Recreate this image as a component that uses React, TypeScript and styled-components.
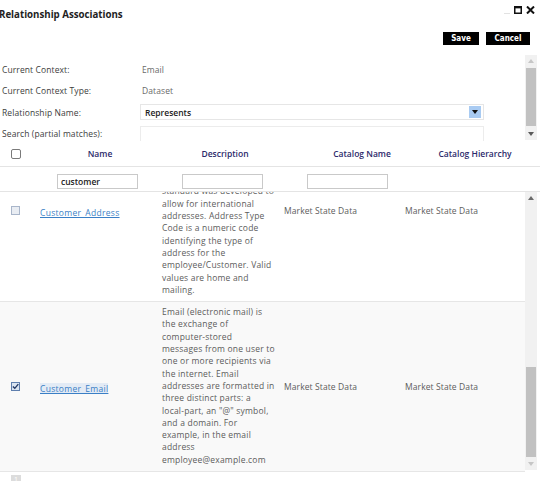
import React, { useLayoutEffect, useRef } from 'react';
import styled, { createGlobalStyle } from 'styled-components';

const FONT = `"Open Sans", "Noto Sans", sans-serif`;

const GlobalStyle = createGlobalStyle`
  html, body { margin: 0; padding: 0; background: #fff; }
  body { font-family: ${FONT}; }
  * { box-sizing: border-box; }
`;

const Dialog = styled.div`
  width: 540px;
  height: 481px;
  overflow: hidden;
  display: flex;
  flex-direction: column;
  background: #fff;
  color: #4a4a4a;
`;

const TitleBar = styled.div`
  height: 28px;
  flex: none;
  display: flex;
  align-items: center;
  justify-content: space-between;
  padding-right: 5px;
`;

const Title = styled.h1`
  margin: 0 0 0 -1px;
  font-size: 9.7px;
  font-weight: 700;
  color: #1e1e1e;
`;

const WindowControls = styled.div`
  align-self: flex-start;
  margin-top: 6px;
  display: flex;
  align-items: flex-end;
  gap: 4px;
`;

const ButtonBar = styled.div`
  height: 27px;
  flex: none;
  display: flex;
  justify-content: flex-end;
  align-items: flex-start;
  gap: 7px;
  padding: 4px 10px 0 0;
`;

const DarkButton = styled.button<{ $w: number }>`
  width: ${(p) => p.$w}px;
  height: 13px;
  padding: 0;
  border: 1px solid #000;
  background: #000;
  color: #fff;
  font-family: "DejaVu Sans Condensed", "DejaVu Sans", sans-serif;
  font-weight: 700;
  font-size: 8px;
  line-height: 11px;
  cursor: pointer;
`;

/* ---------- scroll frames with drawn scrollbars ---------- */

const ScrollFrame = styled.div<{ $h: number }>`
  height: ${(p) => p.$h}px;
  flex: none;
  display: flex;
  padding-right: 3px;
`;

const ScrollContent = styled.div`
  flex: 1;
  min-width: 0;
  overflow-y: auto;
  scrollbar-width: none;
  &::-webkit-scrollbar {
    display: none;
  }
`;

const Track = styled.div<{ $bottomGap: number }>`
  width: 12px;
  flex: none;
  display: flex;
  flex-direction: column;
  background: #f1f1f1;
  margin-bottom: ${(p) => p.$bottomGap}px;
`;

const ArrowButton = styled.div`
  height: 12px;
  flex: none;
  display: flex;
  align-items: center;
  justify-content: center;
`;

const Spacer = styled.div`
  flex: 1;
`;

const Thumb = styled.div<{ $size: number }>`
  height: ${(p) => p.$size}px;
  flex: none;
  margin: 1px 1px;
  background: #c1c1c1;
`;

function Arrow({ dir, color }: { dir: 'up' | 'down'; color: string }) {
  return (
    <ArrowButton>
      <svg width="6" height="4" viewBox="0 0 6 4">
        <path d={dir === 'up' ? 'M0 4 H6 L3 0 Z' : 'M0 0 H6 L3 4 Z'} fill={color} />
      </svg>
    </ArrowButton>
  );
}

function ScrollBar({
  thumb,
  atEnd,
  upColor,
  downColor,
  bottomGap = 0,
}: {
  thumb: number;
  atEnd: boolean;
  upColor: string;
  downColor: string;
  bottomGap?: number;
}) {
  return (
    <Track $bottomGap={bottomGap}>
      <Arrow dir="up" color={upColor} />
      {atEnd && <Spacer />}
      <Thumb $size={thumb} />
      {!atEnd && <Spacer />}
      <Arrow dir="down" color={downColor} />
    </Track>
  );
}

/* ---------- form ---------- */

const FormBody = styled.div`
  padding: 4px 0 6px 0;
`;

const FormRow = styled.div`
  height: 21.3px;
  display: grid;
  grid-template-columns: 140px 344px;
  align-items: center;
`;

const Label = styled.div`
  padding-left: 2px;
  font-size: 8.5px;
  letter-spacing: 0.1px;
  color: #3d3d3d;
`;

const Value = styled.div`
  padding-left: 2px;
  font-size: 8.5px;
  letter-spacing: 0.1px;
  color: #6a6a6a;
`;

const SelectBox = styled.div`
  height: 16px;
  display: flex;
  align-items: center;
  justify-content: space-between;
  border: 1px solid #e6e6e6;
  padding: 0 2px 0 4px;
  font-size: 8.5px;
  font-weight: 600;
  color: #222;
`;

const DropButton = styled.span`
  width: 12px;
  height: 12px;
  background: #a9cbf2;
  display: flex;
  align-items: center;
  justify-content: center;
`;

const TextBox = styled.div`
  height: 16px;
  border: 1px solid #ececec;
`;

/* ---------- table ---------- */

const HeadGrid = styled.div`
  flex: none;
  display: grid;
  grid-template-columns: 30px 135px 125px 125px 125px;
  align-items: center;
  border-bottom: 1px solid #e4e4e4;
`;

const HeadRow = styled(HeadGrid)`
  height: 26px;
`;

const FilterRow = styled(HeadGrid)`
  height: 25px;
`;

const HeadCell = styled.div<{ $pl?: number; $pr?: number }>`
  text-align: center;
  padding-left: ${(p) => p.$pl ?? 0}px;
  padding-right: ${(p) => p.$pr ?? 0}px;
  font-size: 8.5px;
  font-weight: 600;
  color: #2c2a6b;
`;

const CheckCell = styled.div`
  display: flex;
  justify-content: center;
  padding-left: 1px;
`;

const HeadCheck = styled.span`
  width: 10px;
  height: 10px;
  border: 1px solid #7a7a7a;
  border-radius: 2px;
  background: #fff;
`;

const FilterInput = styled.input<{ $ml: number }>`
  margin-left: ${(p) => p.$ml}px;
  width: 81px;
  height: 15px;
  border: 1px solid #c9c9c9;
  padding: 0 3px;
  font-family: ${FONT};
  font-size: 8.5px;
  font-weight: 600;
  color: #222;
  outline: none;
`;

const Row = styled.div<{ $alt?: boolean }>`
  display: grid;
  grid-template-columns: 30px 130px 122px 121px 1fr;
  align-items: center;
  border-bottom: 1px solid #e6e6e6;
  background: ${(p) => (p.$alt ? '#f9f9f9' : '#fff')};
`;

const RowCheck = styled.span<{ $checked?: boolean }>`
  width: 9px;
  height: 9px;
  border: 1px solid ${(p) => (p.$checked ? '#5f7fae' : '#a9b6ca')};
  background: ${(p) => (p.$checked ? '#dbe5f1' : '#e9edf3')};
  display: flex;
  align-items: center;
  justify-content: center;
`;

const NameCell = styled.div`
  padding-left: 10px;
  padding-bottom: 2px;
`;

const NameLink = styled.a<{ $selected?: boolean }>`
  font-size: 8.5px;
  letter-spacing: 0.3px;
  color: #3a7fc6;
  text-decoration: underline;
  background: ${(p) => (p.$selected ? 'rgba(150,185,230,0.22)' : 'transparent')};
  cursor: pointer;
`;

const DescCell = styled.div`
  padding: 4px 2px 5px 2px;
  font-size: 8.5px;
  letter-spacing: 0.2px;
  line-height: 12.3px;
  color: #5c5c5c;
  white-space: nowrap;
`;

const DescLine = styled.span`
  display: block;
`;

const DataCell = styled.div`
  padding-left: 2px;
  padding-bottom: 1px;
  font-size: 8.5px;
  letter-spacing: 0.1px;
  color: #5c5c5c;
`;

const Footer = styled.div`
  flex: 1;
  display: flex;
  align-items: flex-start;
  padding: 3px 0 0 11px;
`;

const PageBox = styled.span`
  width: 10px;
  height: 10px;
  background: #dcdcdc;
  color: #fff;
  font-size: 7px;
  line-height: 10px;
  text-align: center;
`;

type Item = { name: string; checked: boolean; alt: boolean; lines: string[] };

const rows: Item[] = [
  {
    name: 'Customer_Address',
    checked: false,
    alt: false,
    lines: [
      'This entity stores the postal',
      'address details of each',
      'employee or customer. The',
      'address format follows the',
      'ISO 19160 international',
      'standard was developed to',
      'allow for international',
      'addresses. Address Type',
      'Code is a numeric code',
      'identifying the type of',
      'address for the',
      'employee/Customer. Valid',
      'values are home and',
      'mailing.',
    ],
  },
  {
    name: 'Customer_Email',
    checked: true,
    alt: true,
    lines: [
      'Email (electronic mail) is',
      'the exchange of',
      'computer-stored',
      'messages from one user to',
      'one or more recipients via',
      'the internet. Email',
      'addresses are formatted in',
      'three distinct parts: a',
      'local-part, an "@" symbol,',
      'and a domain. For',
      'example, in the email',
      'address',
      'employee@example.com',
    ],
  },
];

export default function App() {
  const bodyRef = useRef<HTMLDivElement>(null);
  useLayoutEffect(() => {
    const el = bodyRef.current;
    if (el) el.scrollTop = el.scrollHeight;
  }, []);

  return (
    <>
      <GlobalStyle />
      <Dialog>
        <TitleBar>
          <Title>Relationship Associations</Title>
          <WindowControls>
            <svg width="6" height="8" viewBox="0 0 6 8">
              <line x1="0" y1="7.5" x2="6" y2="7.5" stroke="#e2e2e2" strokeWidth="1" />
            </svg>
            <svg width="8" height="8" viewBox="0 0 8 8">
              <rect x="0.75" y="0.75" width="6.5" height="6.5" fill="none" stroke="#111" strokeWidth="1.5" />
              <line x1="0.5" y1="1.6" x2="7.5" y2="1.6" stroke="#111" strokeWidth="1.5" />
            </svg>
            <svg width="9" height="8" viewBox="0 0 9 8">
              <path d="M1 0.5 L8 7.5 M8 0.5 L1 7.5" stroke="#111" strokeWidth="2" />
            </svg>
          </WindowControls>
        </TitleBar>

        <ButtonBar>
          <DarkButton $w={36}>Save</DarkButton>
          <DarkButton $w={44}>Cancel</DarkButton>
        </ButtonBar>

        <ScrollFrame $h={86}>
          <ScrollContent>
            <FormBody>
              <FormRow>
                <Label>Current Context:</Label>
                <Value>Email</Value>
              </FormRow>
              <FormRow>
                <Label>Current Context Type:</Label>
                <Value>Dataset</Value>
              </FormRow>
              <FormRow>
                <Label>Relationship Name:</Label>
                <SelectBox>
                  Represents
                  <DropButton>
                    <svg width="6" height="4" viewBox="0 0 6 4">
                      <path d="M0 0 H6 L3 4 Z" fill="#111" />
                    </svg>
                  </DropButton>
                </SelectBox>
              </FormRow>
              <FormRow>
                <Label>Search (partial matches):</Label>
                <TextBox />
              </FormRow>
            </FormBody>
          </ScrollContent>
          <ScrollBar thumb={58} atEnd={false} upColor="#c6c6c6" downColor="#5a5a5a" bottomGap={1} />
        </ScrollFrame>

        <HeadRow>
          <CheckCell>
            <HeadCheck />
          </CheckCell>
          <HeadCell $pl={5}>Name</HeadCell>
          <HeadCell $pr={5}>Description</HeadCell>
          <HeadCell $pl={19}>Catalog Name</HeadCell>
          <HeadCell $pr={5}>Catalog Hierarchy</HeadCell>
        </HeadRow>

        <FilterRow>
          <div />
          <div>
            <FilterInput $ml={27} defaultValue="customer" />
          </div>
          <div>
            <FilterInput $ml={17} defaultValue="" />
          </div>
          <div>
            <FilterInput $ml={17} defaultValue="" />
          </div>
          <div />
        </FilterRow>

        <ScrollFrame $h={280}>
          <ScrollContent ref={bodyRef}>
            {rows.map((r) => (
              <Row key={r.name} $alt={r.alt}>
                <CheckCell>
                  <RowCheck $checked={r.checked}>
                    {r.checked && (
                      <svg width="8" height="7" viewBox="0 0 8 7">
                        <path d="M1 3.5 L3.2 5.6 L7.2 0.8" fill="none" stroke="#243a66" strokeWidth="1.6" />
                      </svg>
                    )}
                  </RowCheck>
                </CheckCell>
                <NameCell>
                  <NameLink $selected={r.checked}>{r.name}</NameLink>
                </NameCell>
                <DescCell>
                  {r.lines.map((l, j) => (
                    <DescLine key={j}>{l}</DescLine>
                  ))}
                </DescCell>
                <DataCell>Market State Data</DataCell>
                <DataCell>Market State Data</DataCell>
              </Row>
            ))}
          </ScrollContent>
          <ScrollBar thumb={90} atEnd upColor="#6a6a6a" downColor="#c6c6c6" bottomGap={2} />
        </ScrollFrame>

        <Footer>
          <PageBox>1</PageBox>
        </Footer>
      </Dialog>
    </>
  );
}
